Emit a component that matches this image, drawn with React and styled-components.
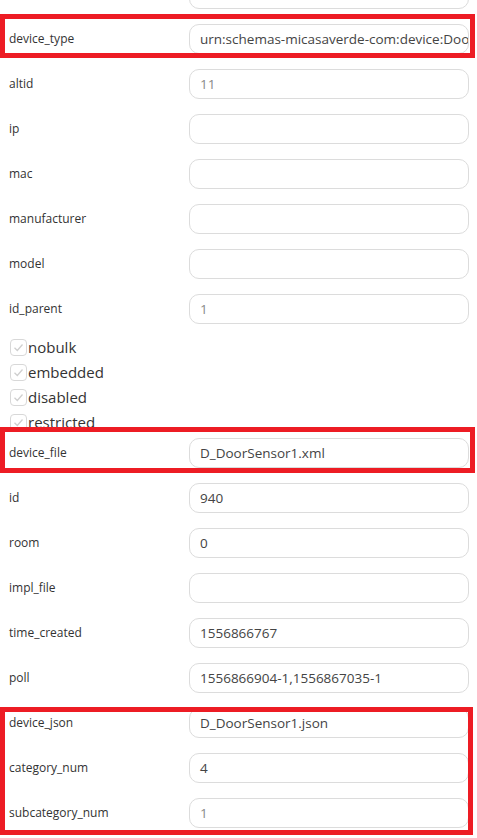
import React from 'react';
import styled, { createGlobalStyle } from 'styled-components';

const GlobalStyle = createGlobalStyle`
  html, body {
    margin: 0;
    padding: 0;
    background: #fff;
    overflow: hidden;
  }
  body {
    font-family: "Open Sans", "Liberation Sans", sans-serif;
  }
`;

const topFields = [
  { name: 'device_type', value: 'urn:schemas-micasaverde-com:device:DoorSensor:1' },
  { name: 'altid', value: '11', light: true },
  { name: 'ip', value: '' },
  { name: 'mac', value: '' },
  { name: 'manufacturer', value: '' },
  { name: 'model', value: '' },
  { name: 'id_parent', value: '1', light: true },
];

const flags = ['nobulk', 'embedded', 'disabled', 'restricted'];

const midFields = [
  { name: 'id', value: '940' },
  { name: 'room', value: '0' },
  { name: 'impl_file', value: '' },
  { name: 'time_created', value: '1556866767' },
  { name: 'poll', value: '1556866904-1,1556867035-1' },
];

const lastFields = [
  { name: 'device_json', value: 'D_DoorSensor1.json' },
  { name: 'category_num', value: '4' },
  { name: 'subcategory_num', value: '1', light: true },
];

function Field({ name, value, light }) {
  return (
    <Row>
      <Label>{name}</Label>
      <Input $light={light}>{value}</Input>
    </Row>
  );
}

function Check({ label }) {
  return (
    <CheckLine>
      <Box>
        <svg width="13" height="13" viewBox="0 0 13 13">
          <path d="M2.5 6.8 L5.3 9.5 L10.5 3.5" fill="none" stroke="#cfcfcf" strokeWidth="1.3" />
        </svg>
      </Box>
      <CheckText>{label}</CheckText>
    </CheckLine>
  );
}

export default function App() {
  return (
    <>
      <GlobalStyle />
      <Page>
        <Field name="" value="" />
        <Highlight $top={-2} $bottom={3}>
          <Field {...topFields[0]} />
        </Highlight>
        {topFields.slice(1).map((f) => (
          <Field key={f.name} {...f} />
        ))}
        <Checks>
          {flags.map((f) => (
            <Check key={f} label={f} />
          ))}
        </Checks>
        <Highlight $top={-3.5} $bottom={2.5}>
          <Field name="device_file" value="D_DoorSensor1.xml" />
        </Highlight>
        {midFields.map((f) => (
          <Field key={f.name} {...f} />
        ))}
        <Highlight $top={6.5} $bottom={0.5} $right={4}>
          {lastFields.map((f) => (
            <Field key={f.name} {...f} />
          ))}
        </Highlight>
      </Page>
    </>
  );
}

const Page = styled.div`
  margin-top: -29px;
  width: 477px;
  display: flex;
  flex-direction: column;
`;

const Row = styled.div`
  display: flex;
  align-items: center;
  height: 45px;
  padding-left: 9px;
  background: #fff;
`;

const Label = styled.div`
  width: 180px;
  flex-shrink: 0;
  font-size: 12px;
  color: #333;
`;

const Input = styled.div`
  box-sizing: border-box;
  width: 280px;
  height: 30px;
  border: 1px solid #dcdcdc;
  border-radius: 10px;
  padding: 0 10px;
  display: flex;
  align-items: center;
  font-size: 13.5px;
  color: ${(p) => (p.$light ? '#8a8a8a' : '#444')};
  white-space: nowrap;
  overflow: hidden;
`;

const Highlight = styled.div`
  position: relative;

  &::after {
    content: '';
    position: absolute;
    left: 0;
    right: ${(p) => p.$right ?? 2}px;
    top: ${(p) => p.$top}px;
    bottom: ${(p) => p.$bottom}px;
    border: 5px solid #ed1c24;
    pointer-events: none;
  }
`;

const Checks = styled.div`
  padding-top: 3.5px;
  margin-bottom: -4.5px;
  display: flex;
  flex-direction: column;
`;

const CheckLine = styled.div`
  display: flex;
  align-items: center;
  height: 25px;
  padding-left: 10px;
`;

const Box = styled.span`
  box-sizing: border-box;
  width: 17px;
  height: 17px;
  border: 1px solid #d8d8d8;
  border-radius: 4px;
  display: flex;
  align-items: center;
  justify-content: center;
  margin-right: 1px;
`;

const CheckText = styled.span`
  font-size: 15px;
  color: #333;
`;
